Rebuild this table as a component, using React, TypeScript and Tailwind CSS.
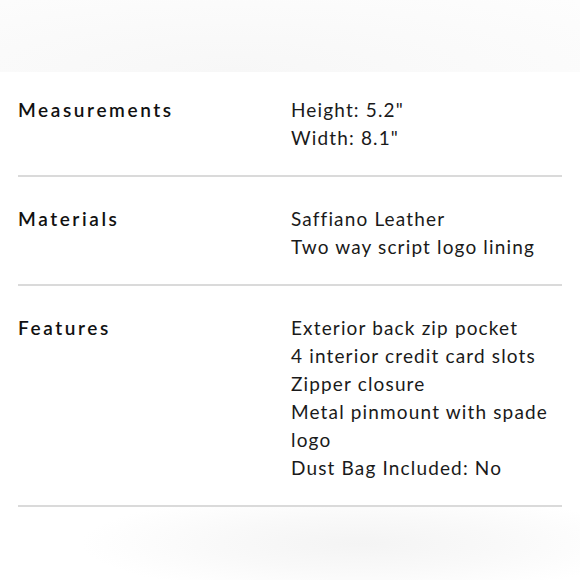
export default function App() {
  const rows = [
    { label: "Measurements", values: ['Height: 5.2"', 'Width: 8.1"'], pt: "pt-[24px]" },
    { label: "Materials", values: ["Saffiano Leather", "Two way script logo lining"], pt: "pt-[28px]" },
    {
      label: "Features",
      values: [
        "Exterior back zip pocket",
        "4 interior credit card slots",
        "Zipper closure",
        "Metal pinmount with spade logo",
        "Dust Bag Included: No",
      ],
      pt: "pt-[28px]",
    },
  ];
  return (
    <div className="w-[580px] h-[580px] overflow-hidden bg-white flex flex-col" style={{ fontFamily: "Lato, 'Liberation Sans', sans-serif" }}>
      <div className="h-[72px] bg-[radial-gradient(ellipse_at_40%_100%,#f7f7f7_0%,#fafafa_50%,#fdfdfd_100%)] shrink-0" />
      <div className="px-[18px]">
        {rows.map((r) => (
          <div key={r.label} className={`flex ${r.pt} pb-[23px] border-b-2 border-[#dadada]`}>
            <div className="w-[273px] shrink-0 text-[19px] leading-[28px] font-semibold tracking-[2.6px] text-[#111]">{r.label}</div>
            <div className="w-[262px] text-[19px] leading-[28px] tracking-[1.15px] text-[#1a1a1a]">
              {r.values.map((v) => (
                <div key={v}>{v}</div>
              ))}
            </div>
          </div>
        ))}
      </div>
      <div className="flex-1 bg-[radial-gradient(ellipse_60%_90%_at_62%_50%,#f4f4f4_0%,#f9f9f9_40%,#ffffff_80%)]" />
    </div>
  );
}
